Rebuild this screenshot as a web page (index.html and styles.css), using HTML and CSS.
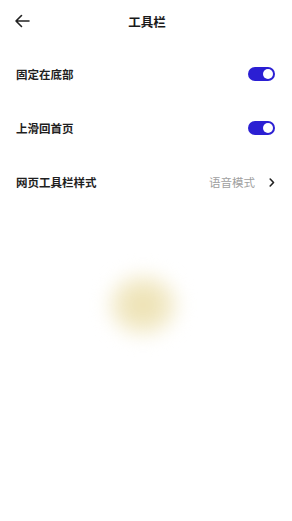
FILE: index.html
```html
<!DOCTYPE html>
<html lang="zh">
<head>
    <meta charset="UTF-8">
    <title>工具栏</title>
    <link rel="stylesheet" href="styles.css">
</head>
<body>
    <div class="header">
        <svg class="back" width="16" height="14" viewBox="0 0 16 14">
            <path d="M15 7H2M7.5 1.5L2 7l5.5 5.5" fill="none" stroke="#222" stroke-width="1.6" stroke-linecap="round" stroke-linejoin="round"/>
        </svg>
        <h1 class="title">工具栏</h1>
    </div>

    <div class="list">
        <div class="row">
            <span class="label">固定在底部</span>
            <span class="switch on"><span class="knob"></span></span>
        </div>
        <div class="row">
            <span class="label">上滑回首页</span>
            <span class="switch on"><span class="knob"></span></span>
        </div>
        <div class="row">
            <span class="label">网页工具栏样式</span>
            <span class="value">语音模式</span>
            <svg class="chev" width="6" height="9" viewBox="0 0 6 9">
                <path d="M1.2 1l3.3 3.5L1.2 8" fill="none" stroke="#222" stroke-width="1.6" stroke-linecap="round" stroke-linejoin="round"/>
            </svg>
        </div>
    </div>

    <div class="glow"></div>
</body>
</html>
```

FILE: styles.css
```css
body { margin: 0; background: #fff; font-family: "Noto Sans CJK SC", "Noto Sans", sans-serif; color: #222; width: 292px; height: 521px; overflow: hidden; }
.header { height: 42px; display: flex; align-items: center; justify-content: center; position: relative; }
.back { position: absolute; left: 14px; top: 14px; }
.title { margin: 0 0 0 2px; font-size: 12.5px; font-weight: 700; color: #1a1a1a; }
.list { padding: 5px 17px 0 16px; }
.row { height: 54px; display: flex; align-items: center; }
.label { flex: 1; font-size: 11.5px; font-weight: 700; color: #1f1f1f; }
.value { font-size: 11.5px; color: #a0a0a0; margin-right: 14px; margin-left: 2px; }
.chev { margin-right: 0; }
.switch { width: 27px; height: 14px; border-radius: 7px; background: #e0e0e0; display: flex; align-items: center; padding: 0 2px; box-sizing: border-box; }
.switch.on { background: #2b1fd3; justify-content: flex-end; }
.knob { width: 10px; height: 10px; border-radius: 50%; background: #fff; }
.glow { width: 70px; height: 62px; margin: 65px 0 0 108px; border-radius: 50%; background: radial-gradient(ellipse at center, #ebdfaa 0%, #f1e8c4 40%, #f9f5e4 75%, #fff 100%); filter: blur(9px); }
```
